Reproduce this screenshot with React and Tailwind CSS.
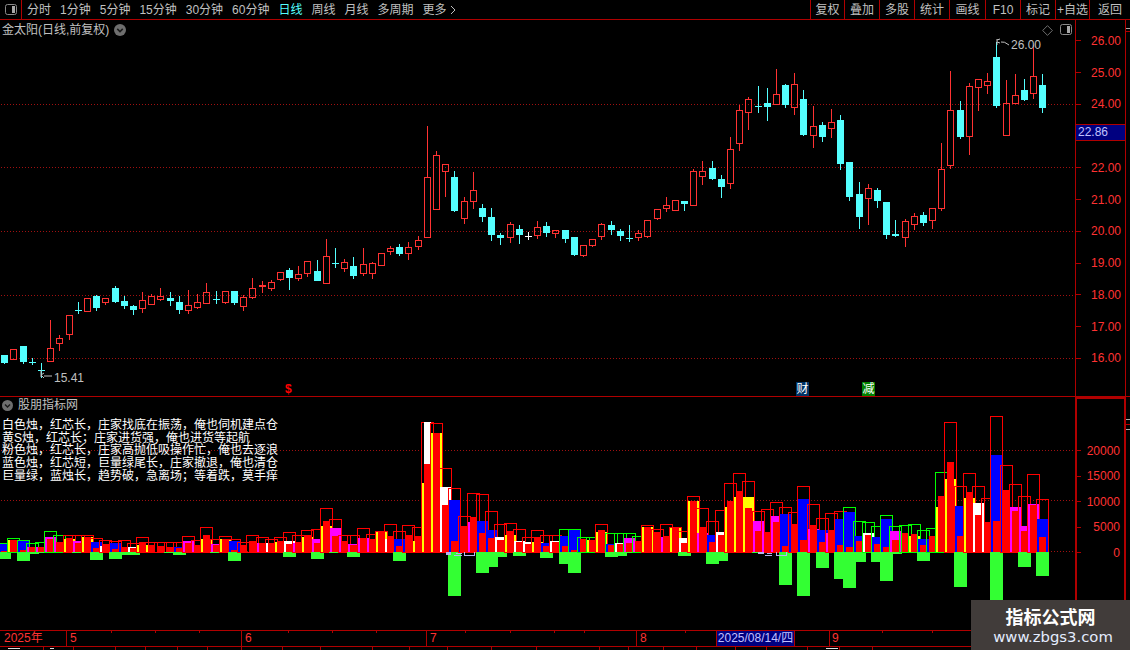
const FONT = "font-['Liberation_Sans','Noto_Sans_CJK_SC',sans-serif]";

// [wickTop, bodyTop, bodyBottom, wickBottom, colour]  (r hollow red, c solid cyan, w white)
const K = [
[355,355,363,364,'c'],[349,349,360,360,'r'],[346,346,362,364,'c'],[358,362,363,365,'c'],[363,370,371,378,'c'],
[320,348,362,362,'r'],[335,338,344,351,'r'],[315,315,335,340,'r'],[302,310,311,314,'c'],[298,298,312,312,'r'],
[295,296,308,311,'c'],[298,298,303,305,'r'],[286,288,302,303,'c'],[296,301,306,309,'c'],[305,306,310,315,'c'],
[292,300,309,313,'r'],[294,296,305,305,'r'],[288,296,300,301,'r'],[292,298,301,306,'c'],[296,302,310,314,'c'],
[290,305,311,314,'r'],[294,302,308,309,'r'],[283,292,304,304,'r'],[291,299,300,304,'c'],[291,291,303,304,'r'],
[291,291,303,305,'c'],[295,297,307,311,'r'],[278,288,298,299,'r'],[281,285,287,293,'f'],[280,282,289,291,'r'],
[272,272,280,281,'r'],[268,270,278,290,'c'],[266,274,279,281,'r'],[261,261,274,277,'r'],[260,271,281,281,'c'],
[239,256,284,284,'r'],[248,263,264,268,'c'],[259,262,269,272,'r'],[257,266,276,279,'c'],[248,264,274,276,'r'],
[262,263,274,279,'r'],[253,253,266,266,'r'],[246,248,252,255,'r'],[244,247,254,256,'c'],[242,247,254,260,'r'],
[236,240,247,250,'r'],[126,177,238,238,'r'],[151,155,210,210,'r'],[164,164,172,197,'r'],[171,177,211,212,'c'],
[197,201,219,224,'r'],[172,190,202,209,'r'],[204,208,217,222,'c'],[208,217,235,241,'c'],[233,235,238,245,'c'],
[222,224,238,243,'r'],[225,229,235,244,'c'],[232,236,237,240,'w'],[221,227,236,239,'r'],[222,226,233,237,'c'],
[230,230,234,238,'r'],[230,230,239,243,'c'],[237,237,255,256,'c'],[245,245,256,257,'r'],[239,239,246,247,'r'],
[223,224,237,240,'r'],[221,225,230,235,'c'],[229,231,236,241,'c'],[225,238,239,242,'c'],[230,233,238,241,'r'],
[220,220,237,238,'r'],[209,209,219,220,'r'],[197,205,209,212,'r'],[200,200,211,211,'r'],[201,201,204,211,'c'],
[169,171,206,206,'r'],[161,171,177,185,'r'],[161,168,179,180,'c'],[175,179,187,198,'c'],[137,149,184,189,'r'],
[105,110,144,151,'r'],[97,99,113,130,'r'],[86,106,107,113,'c'],[88,103,107,121,'c'],[69,94,105,105,'r'],
[84,85,105,108,'c'],[73,84,108,115,'r'],[90,99,135,136,'c'],[106,126,136,148,'r'],[122,125,137,142,'c'],
[109,122,129,138,'r'],[115,120,164,170,'c'],[162,162,197,201,'c'],[182,194,217,229,'c'],[184,188,199,225,'r'],
[188,190,201,208,'c'],[202,202,235,239,'c'],[220,234,236,237,'c'],[219,221,238,247,'r'],[213,216,225,230,'r'],
[212,215,223,226,'c'],[208,208,221,229,'r'],[143,169,209,211,'r'],[71,110,166,169,'r'],[101,110,137,139,'c'],
[83,86,137,155,'r'],[79,79,88,111,'r'],[73,81,86,94,'r'],[42,57,106,108,'c'],[80,103,136,136,'r'],
[74,95,104,104,'r'],[79,90,100,101,'c'],[45,76,94,99,'r'],[74,85,108,113,'c'],
];

// [outline height, outline colour, fill height, fill colour, core height, green height below]
const V = [
[9,'g',8,'b',1,7],[14,'g',12,'y',12,0],[12,'g',11,'b',2,9],[9,'g',5,'m',5,2],[10,'g',0,'',5,1],[21,'g',15,'m',13,0],
[17,'g',0,'',10,0],[17,'r',13,'y',14,0],[17,'r',11,'m',9,1],[17,'r',15,'y',15,0],[14,'r',10,'b',4,8],[12,'r',6,'w',8,0],
[11,'r',9,'b',3,7],[12,'r',0,'',5,3],[9,'r',5,'w',4,3],[15,'r',7,'y',10,0],[10,'r',0,'',7,0],[10,'r',0,'',6,0],
[10,'r',0,'',5,1],[10,'r',5,'b',4,3],[16,'r',11,'m',9,0],[12,'r',0,'',7,0],[25,'r',13,'y',17,0],[13,'r',8,'m',7,1],
[16,'r',13,'y',13,0],[13,'r',11,'b',2,9],[10,'r',0,'',7,0],[17,'r',0,'',11,0],[15,'r',9,'m',9,0],[13,'r',9,'w',9,0],
[15,'r',10,'y',11,0],[20,'r',11,'w',8,5],[17,'r',9,'m',10,0],[22,'r',15,'y',17,0],[23,'r',13,'m',9,7],[44,'r',26,'y',31,0],
[33,'r',24,'m',16,1],[17,'r',0,'',11,0],[17,'r',8,'m',7,5],[24,'r',14,'m',14,0],[18,'r',0,'',13,0],[21,'r',20,'y',21,0],
[28,'r',13,'w',16,0],[21,'r',13,'b',6,9],[27,'r',0,'',17,0],[25,'r',11,'y',16,0],[130,'r',69,'y',88,0,'w',130],[129,'r',119,'y',119,0],
[84,'r',65,'w',47,0],[64,'r',52,'b',11,44],[36,'r',0,'',26,0],[59,'r',30,'m',35,0],[58,'r',31,'b',19,21],[41,'r',22,'b',14,15],
[28,'r',15,'w',12,5],[29,'r',17,'y',21,0],[23,'r',11,'w',10,4],[15,'r',10,'w',8,0],[22,'r',10,'y',15,0],[17,'r',9,'b',6,6],
[17,'r',11,'w',10,0],[23,'g',16,'b',6,12],[23,'g',22,'b',2,21],[15,'g',0,'',13,0],[15,'g',12,'y',12,0],[28,'r',20,'y',22,0],
[19,'g',8,'b',7,5],[19,'g',9,'w',8,4],[19,'g',14,'m',9,1],[16,'g',0,'',11,0],[27,'r',25,'y',25,0],[23,'r',0,'',20,0],
[28,'r',15,'m',16,0],[25,'r',24,'y',25,0],[21,'r',14,'w',9,4],[56,'r',51,'y',51,0],[44,'r',19,'m',25,0],[31,'r',17,'b',10,12],
[42,'r',20,'w',17,9],[69,'r',45,'y',51,0],[79,'r',55,'y',61,0],[71,'r',55,'y',44,0],[41,'r',31,'m',21,1],[43,'r',19,'m',20,0],
[50,'r',36,'m',30,0],[45,'r',38,'b',6,33],[40,'r',0,'',28,0],[66,'r',53,'b',12,44],[48,'r',23,'m',27,0],[34,'r',22,'b',10,16],
[39,'r',19,'m',22,0],[41,'r',33,'b',7,27],[45,'g',40,'b',5,36],[31,'g',16,'b',11,10],[30,'g',19,'w',17,0],[26,'g',15,'b',8,10],
[37,'g',33,'b',5,29],[26,'g',21,'m',12,2],[27,'g',0,'',19,0],[28,'g',16,'y',18,0],[22,'g',13,'b',7,9],[24,'g',0,'',16,0],
[80,'g',45,'y',56,0],[130,'r',73,'y',90,0],[66,'r',46,'b',16,35],[79,'r',54,'y',60,0],[66,'r',49,'w',37,0],[54,'r',0,'',30,0],
[136,'r',97,'b',31,49],[87,'r',0,'',62,0],[68,'r',45,'m',41,0],[56,'r',26,'m',21,15],[78,'r',48,'m',47,0],[53,'r',33,'b',15,24],
];

const FILL = { b: '#0000ff', y: '#ffff00', m: '#ff00ff', w: '#ffffff' };
const OUT = { r: '#ff0000', g: '#00ff00' };
const cx = (i) => Math.round(4.3 + 9.186 * i);
const BASE = 552;

function Candle({ d, i }) {
  const [hi, top, bot, lo, c] = d;
  const x = cx(i);
  if (c === 'r') {
    return (
      <g stroke="#ff3232" fill="none">
        {hi < top && <line x1={x + 0.5} x2={x + 0.5} y1={hi} y2={top} />}
        {lo > bot && <line x1={x + 0.5} x2={x + 0.5} y1={bot} y2={lo} />}
        <rect x={x - 2.5} y={top + 0.5} width={6} height={bot - top - 1} />
      </g>
    );
  }
  const col = c === 'c' ? '#54ffff' : c === 'w' ? '#ffffff' : '#ff3232';
  return (
    <g fill={col}>
      <rect x={x} y={hi} width={1} height={lo - hi} />
      <rect x={x - 3} y={top} width={7} height={Math.max(1, bot - top)} />
    </g>
  );
}

function Bar({ d, i }) {
  const [oh, oc, fh, fc, ch, gh, xc, xh] = d;
  const x = cx(i);
  return (
    <g>
      <rect x={x - 5.5} y={BASE - oh + 0.5} width={12} height={oh} fill="none" stroke={OUT[oc]} />
      {fh > 0 && <rect x={x - 5} y={BASE - fh} width={11} height={fh} fill={FILL[fc]} />}
      {xc && <rect x={x - 3} y={BASE - xh} width={7} height={xh} fill={FILL[xc]} />}
      <rect x={x - 3} y={BASE - ch} width={7} height={ch} fill="#ff0000" />
      {gh > 0 && <rect x={x - 6} y={BASE} width={13} height={gh} fill="#33ff33" />}
    </g>
  );
}

function Dotted({ y, x2 = 1075 }) {
  return <line x1="1" x2={x2} y1={y + 0.5} y2={y + 0.5} stroke="#a01010" strokeDasharray="1 2" shapeRendering="auto" />;
}

function RoundChevron({ cls }) {
  return (
    <svg viewBox="0 0 11 11" className={cls}>
      <circle cx="5.5" cy="5.5" r="5.5" fill="#6e6e6e" />
      <path d="M3 4.5 L5.5 7 L8 4.5" fill="none" stroke="#1a1a1a" strokeWidth="1.4" />
    </svg>
  );
}

const LEFT_TABS = ['分时', '1分钟', '5分钟', '15分钟', '30分钟', '60分钟', '日线', '周线', '月线', '多周期'];
const RIGHT_TABS = [['复权', 'w-[34px]'], ['叠加', 'w-[35px]'], ['多股', 'w-[35px]'], ['统计', 'w-[35px]'], ['画线', 'w-[36px]'], ['F10', 'w-[35px]'], ['标记', 'w-[35px]'], ['+自选', 'w-[34px]'], ['返回', 'w-[41px]']];
const NOTES = [
  '白色烛，红芯长，庄家找底在振荡，俺也伺机建点仓',
  '黄S烛，红芯长；庄家进货强，俺也进货等起航',
  '粉色烛，红芯长，庄家高抛低吸操作忙，俺也去逐浪',
  '蓝色烛，红芯短，巨量绿尾长，庄家撤退，俺也清仓',
  '巨量绿，蓝烛长，趋势破，急离场；等着跌，莫手痒',
];
const PRICES = ['26.00', '25.00', '24.00', '', '22.00', '21.00', '20.00', '19.00', '18.00', '17.00', '16.00'];
const VOLS = ['20000', '15000', '10000', '5000', '0'];
const MONTHS = [
  ['2025年', 'w-[67px] pl-1'], ['5', 'w-[175px] pl-[3px]'], ['6', 'w-[185px] pl-[3px]'], ['7', 'w-[210px] pl-[3px]'], ['8', 'w-[80px] pl-[3px]'],
];

export default function App() {
  return (
    <div className={`w-[1130px] h-[650px] bg-black overflow-hidden flex flex-col ${FONT}`}>
      {/* toolbar */}
      <header className="h-5 shrink-0 flex border-b border-[#b00000] text-[#c0c0c0]">
        <div className="w-[22px] flex items-center justify-center border-r border-[#b00000]">
          <svg viewBox="0 0 12 11" className="w-3 h-[11px]">
            <rect x="0.5" y="0.5" width="11" height="10" rx="2" fill="none" stroke="#8a8a8a" />
            <rect x="7" y="2" width="3" height="7" fill="#a8a8a8" />
          </svg>
        </div>
        <div className="flex items-center gap-[9px] pl-[5px] text-[12px]">
          {LEFT_TABS.map((t) => (
            <span key={t} className={t === '日线' ? 'text-[#54ffff]' : ''}>{t}</span>
          ))}
          <span className="flex items-center gap-[3px]">更多
            <svg viewBox="0 0 6 10" className="w-[6px] h-[10px]"><path d="M1 1 L5 5 L1 9" fill="none" stroke="#c0c0c0" /></svg>
          </span>
        </div>
        <div className="ml-auto flex text-[12px]">
          {RIGHT_TABS.map(([t, w]) => (
            <span key={t} className={`${w} flex items-center justify-center border-l border-[#b00000]`}>{t}</span>
          ))}
        </div>
      </header>

      {/* price panel */}
      <section className="h-[377px] shrink-0 flex border-b border-[#b00000]">
        <div className="w-[1075px] relative">
          <svg viewBox="0 20 1075 376" className="absolute inset-0 w-[1075px] h-[376px]" shapeRendering="crispEdges">
            {[104, 167, 231, 295, 358].map((y) => <Dotted key={y} y={y} />)}
            {K.map((d, i) => <Candle key={i} d={d} i={i} />)}
            <g stroke="#c0c0c0" fill="none" shapeRendering="auto">
              <path d="M41 370 V377 M41 375 L44 373 M41 375 L44 378 M44 376 H52" />
              <path d="M997 45 V39 M997 40 L1000 39 M997 42 L1000 43 M1001 42 Q1004 41 1009 45" />
            </g>
          </svg>
          <div className="relative flex items-center gap-[5px] pl-[2px] pt-[3px] text-[12px] leading-[14px] text-[#c0c0c0]">
            <span>金太阳(日线,前复权)</span>
            <RoundChevron cls="w-3 h-3" />
          </div>
          <span className="absolute left-[54px] top-[351px] text-[12px] leading-[14px] text-[#c0c0c0]">15.41</span>
          <span className="absolute left-[1011px] top-[18px] text-[12px] leading-[14px] text-[#c0c0c0]">26.00</span>
          <svg viewBox="0 0 12 12" className="absolute left-[1042px] top-[5px] w-[11px] h-[11px]">
            <path d="M6 0.7 L11.3 6 L6 11.3 L0.7 6 Z" fill="none" stroke="#7a7a7a" />
          </svg>
          <svg viewBox="0 0 12 11" className="absolute left-[1060px] top-[4px] w-3 h-[11px]">
            <rect x="0.5" y="0.5" width="11" height="10" rx="2" fill="none" stroke="#8a8a8a" />
            <rect x="7" y="2" width="3" height="7" fill="#a8a8a8" />
          </svg>
          <span className="absolute left-[285px] top-[362px] text-[12px] leading-[14px] font-bold text-[#ff0000]">$</span>
          <span className="absolute left-[796px] top-[362px] w-[13px] h-[14px] bg-[#003366] text-white text-[12px] leading-[14px] text-center">财</span>
          <span className="absolute left-[862px] top-[362px] w-[13px] h-[14px] bg-[#008000] text-white text-[12px] leading-[14px] text-center">减</span>
        </div>
        <div className="w-[51px] relative border-x border-[#b00000] pt-[5px] text-[12px] text-[#ff3232]">
          {PRICES.map((p, i) => (
            <div key={i} className="h-[31.75px] flex items-center gap-[10px]">
              <span className="w-[5px] h-px bg-[#b00000]" />
              <span>{p}</span>
            </div>
          ))}
          <div className="absolute left-0 right-0 top-[104px] h-[17px] bg-[#000080] border-y border-[#b00000] pl-[2px] text-[12px] leading-[15px] text-[#c0c0ff]">22.86</div>
        </div>
        <div className="flex-1 pt-[8px] flex flex-col gap-[2px]">
          <span className="h-px w-full bg-[#a8a8a8]" />
          <span className="h-px w-full bg-[#b00000]" />
        </div>
      </section>

      {/* volume panel */}
      <section className="h-[234px] shrink-0 flex border-b border-[#b00000]">
        <div className="w-[1075px] relative overflow-hidden">
          <svg viewBox="0 397 1075 233" className="absolute inset-0 w-[1075px] h-[233px]" shapeRendering="crispEdges">
            <Dotted y={450} />
            <Dotted y={500} />
            <Dotted y={551} />
            {V.map((d, i) => <Bar key={i} d={d} i={i} />)}
            <g fill="none" stroke="#b4b4f0">
              <rect x="446" y="552" width="5" height="3" fill="#b4b4f0" stroke="none" />
              <path d="M454 555 H462 M456 553 L462 553 M464 552 V555 H474 V552" />
              <rect x="758" y="552" width="6" height="2" fill="#b4b4f0" stroke="none" />
              <path d="M765 555 H772 M767 553 L772 553 M776 552 V555 H786 V552" />
            </g>
          </svg>
          <div className="relative flex items-center gap-[5px] pl-[2px] pt-[1px] text-[12px] leading-[14px] text-[#c0c0c0]">
            <RoundChevron cls="w-[11px] h-[11px]" />
            <span>股朋指标网</span>
          </div>
          <div className="relative pl-[2px] pt-[7px] text-[12px] leading-[12.7px] text-white whitespace-nowrap">
            {NOTES.map((n) => <div key={n}>{n}</div>)}
          </div>
        </div>
        <div className="w-[51px] border-x-2 border-t-2 border-[#b00000] pt-[39px] text-[12px] text-[#ff3232]">
          {VOLS.map((v) => (
            <div key={v} className="h-[25.5px] flex items-center justify-between pr-[4px]">
              <span className="w-[4px] h-px bg-[#b00000]" />
              <span>{v}</span>
            </div>
          ))}
        </div>
        <div className="flex-1 pt-[22px] flex flex-col gap-[4px] overflow-hidden">
          <span className="h-px w-full bg-[#b0b0b0]" />
          <span className="h-px w-full bg-[#b00000]" />
          <span className="h-px w-full bg-[#b0b0b0]" />
        </div>
      </section>

      {/* date axis */}
      <footer className="h-4 shrink-0 relative flex border-b border-[#b00000] text-[12px] leading-[15px] text-[#ff3232]">
        {MONTHS.map(([t, c]) => (
          <span key={t} className={`${c} border-r border-[#b00000] text-left`}>{t}</span>
        ))}
        <span className="w-[78px] bg-[#000080] border-r border-[#b00000] text-center text-[#c0c0ff]">2025/08/14/四</span>
        <span className="w-[35px] border-r border-[#b00000]" />
        <span className="pl-[2px]">9</span>
        <svg viewBox="0 0 1130 3" className="absolute left-0 top-0 w-[1130px] h-[3px]" shapeRendering="crispEdges">
          {[111, 155, 199, 288, 332, 376, 465, 510, 554, 584, 685, 882, 932].map((x) => (
            <rect key={x} x={x} y="0" width="1" height="2" fill="#b00000" />
          ))}
        </svg>
      </footer>
      <svg viewBox="0 0 1130 4" className="w-[1130px] h-1 shrink-0" shapeRendering="crispEdges">
        {[43, 73, 115, 145, 177, 207, 241, 282, 320, 372, 409, 447, 491, 536, 599, 628, 663, 696, 735, 766, 807, 839, 872].map((x) => (
          <rect key={x} x={x} y="0" width="1" height="4" fill="#b00000" />
        ))}
        <g fill="#e0e0e0">
          <rect x="8" y="1" width="12" height="1" />
          <rect x="50" y="1" width="4" height="1" />
          <rect x="826" y="1" width="12" height="1" />
        </g>
      </svg>

      {/* watermark */}
      <div className="fixed left-[971px] top-[600px] w-[159px] h-[50px] bg-[#413c3a] flex flex-col items-center pt-[5px]">
        <span className="text-[18px] leading-[22px] font-bold text-white font-['Noto_Sans_CJK_SC',sans-serif]">指标公式网</span>
        <span className="pl-[5px] text-[14.8px] leading-[20px] text-[#e4ecff] font-['DejaVu_Sans',sans-serif]">www.zbgs3.com</span>
      </div>
    </div>
  );
}
